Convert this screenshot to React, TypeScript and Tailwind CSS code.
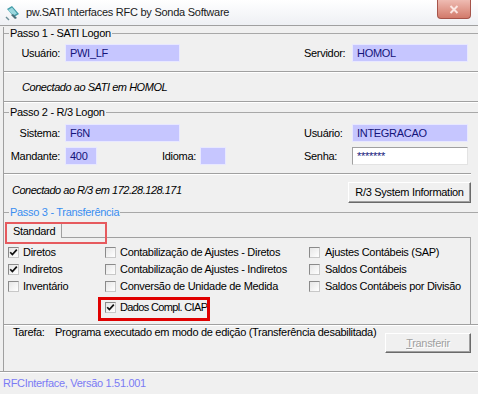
import React from "react";

function Field({ value, w, white }: { value: string; w: string; white?: boolean }) {
  return (
    <div
      className={`${w} h-[18px] flex items-center pl-[4px] text-[#14147a] ${
        white
          ? "bg-white border border-[#a0a0a0] border-r-[#e3e3e3] border-b-[#e3e3e3]"
          : "bg-[#c6c6ff] border border-[#e8e8ff]"
      }`}
    >
      {value}
    </div>
  );
}

function Check({ checked }: { checked?: boolean }) {
  return (
    <span className="w-[11px] h-[11px] shrink-0 flex items-center justify-center border border-[#8a8a8a] border-r-[#c8c8c8] border-b-[#c8c8c8] bg-gradient-to-br from-[#e6e6e6] to-white">
      {checked && (
        <svg width="9" height="9" viewBox="0 0 9 9">
          <path d="M1.2 4.2 L3.4 6.6 L7.8 1.6" stroke="#111" strokeWidth="1.7" fill="none" />
        </svg>
      )}
    </span>
  );
}

function Opt({ label, checked, gap = "gap-[4px]" }: { label: string; checked?: boolean; gap?: string }) {
  return (
    <div className={`flex items-center ${gap}`}>
      <Check checked={checked} />
      <span>{label}</span>
    </div>
  );
}

function WinButton({ children, w, disabled }: { children: React.ReactNode; w: string; disabled?: boolean }) {
  return (
    <button
      className={`${w} h-full flex items-center justify-center bg-[#f0f0f0] border border-t-white border-l-white border-r-[#6a6a6a] border-b-[#6a6a6a] shadow-[inset_-1px_-1px_0_#a0a0a0] ${
        disabled ? "text-[#a0a0a0] [text-shadow:1px_1px_0_#fff]" : "text-black"
      }`}
    >
      {children}
    </button>
  );
}

export default function App() {
  return (
    <div className="w-[478px] h-[394px] overflow-hidden bg-[#f0f0f0] text-[11px] leading-[13px] tracking-[-0.3px] text-black font-['Liberation_Sans',Arial,sans-serif]">
      {/* title bar */}
      <div className="h-[26px] flex items-center border-b border-[#a0a0a0] bg-gradient-to-b from-white to-[#eef0f4]">
        <svg className="ml-[5px] shrink-0" width="16" height="16" viewBox="0 0 16 16">
          <path d="M2 4 L7 1 L14 9 L9 12 Z" fill="#3f9aa6" />
          <path d="M3 5 L7 2.5 L12 8.5 L8.5 10.5 Z" fill="#9ad7de" />
          <path d="M6 10 L10 14 L12 13 L8 9 Z" fill="#4a6f7a" />
          <path d="M1 12 L4 15" stroke="#6c8f98" strokeWidth="1.4" />
        </svg>
        <span className="ml-[5px] text-[11px] tracking-[-0.25px] text-[#1a1a1a]">
          pw.SATI Interfaces RFC by Sonda Software
        </span>
        <div className="ml-auto mr-[7px] self-start w-[34px] h-[19px] rounded-b-[4px] border border-t-0 border-[#a6544a] bg-gradient-to-b from-[#eebbb2] to-[#d27a6b] flex items-center justify-center">
          <svg width="10" height="9" viewBox="0 0 10 9">
            <path d="M1.5 1 L8.5 8 M8.5 1 L1.5 8" stroke="#fbe6e2" strokeWidth="2" />
          </svg>
        </div>
      </div>

      <div className="ml-[3px] w-[475px] border-l border-[#a0a0a0]">
        {/* Passo 1 */}
        <div className="h-[44px]">
          <fieldset className="mt-[1px] border-t border-[#a8a8a8]">
            <legend className="ml-[5px] px-[1px]">Passo 1 - SATI Logon</legend>
            <div className="mt-[4px] flex">
              <div className="w-[61px] pr-[5px] text-right self-center">Usuário:</div>
              <Field value="PWI_LF" w="w-[115px]" />
              <div className="w-[124px]" />
              <div className="w-[48px] self-center">Servidor:</div>
              <Field value="HOMOL" w="w-[116px]" />
            </div>
          </fieldset>
        </div>

        <div className="h-[30px] border-t border-[#a0a0a0] shadow-[inset_0_1px_0_#fff] flex items-center pt-[2px] pl-[18px] italic tracking-[-0.45px]">
          Conectado ao SATI em HOMOL
        </div>

        {/* Passo 2 */}
        <div className="h-[72px] border-t border-[#a0a0a0] shadow-[inset_0_1px_0_#fff]">
          <fieldset className="mt-[4px] border-t border-[#a8a8a8]">
            <legend className="ml-[5px] px-[1px]">Passo 2 - R/3 Logon</legend>
            <div className="mt-[5px] flex">
              <div className="w-[61px] pr-[5px] text-right self-center">Sistema:</div>
              <Field value="F6N" w="w-[115px]" />
              <div className="w-[124px]" />
              <div className="w-[48px] self-center">Usuário:</div>
              <Field value="INTEGRACAO" w="w-[116px]" />
            </div>
            <div className="mt-[5px] flex">
              <div className="w-[61px] pr-[5px] text-right self-center">Mandante:</div>
              <Field value="400" w="w-[32px]" />
              <div className="w-[103px] pr-[4px] text-right self-center">Idioma:</div>
              <Field value="" w="w-[26px]" />
              <div className="w-[78px]" />
              <div className="w-[48px] self-center">Senha:</div>
              <Field value="*******" w="w-[116px]" white />
            </div>
          </fieldset>
        </div>

        <div className="h-[33px] border-t border-[#a0a0a0] shadow-[inset_0_1px_0_#fff] flex items-start w-[467px]">
          <span className="mt-[10px] ml-[8px] italic tracking-[-0.5px]">Conectado ao R/3 em 172.28.128.171</span>
          <div className="ml-auto mt-[8px] h-[21px]">
            <WinButton w="w-[123px]">R/3 System Information</WinButton>
          </div>
        </div>

        {/* Passo 3 */}
        <fieldset className="border-t border-[#a8a8a8]">
          <legend className="ml-[5px] px-[1px] text-[#3a8ef0]">Passo 3 - Transferência</legend>
          <div className="relative h-[19px] w-[467px] flex">
            <div className="mt-[4px] w-[58px] h-[15px] border-r border-[#a0a0a0] pl-[9px] pt-[2px]">Standard</div>
            <div className="flex-1 border-b border-[#a0a0a0]" />
            <div className="absolute left-[1px] top-[3px] w-[102px] h-[22px] border-2 border-[#e65a5e]" />
          </div>
          <div className="h-[86px] w-[467px] border-r border-[#a0a0a0] pt-[6px] pl-[4px]">
            <div className="flex h-[17px] items-center">
              <div className="w-[97px]"><Opt label="Diretos" checked /></div>
              <div className="w-[204px]"><Opt label="Contabilização de Ajustes - Diretos" /></div>
              <Opt label="Ajustes Contábeis (SAP)" gap="gap-[5px]" />
            </div>
            <div className="flex h-[17px] items-center">
              <div className="w-[97px]"><Opt label="Indiretos" checked /></div>
              <div className="w-[204px]"><Opt label="Contabilização de Ajustes - Indiretos" /></div>
              <Opt label="Saldos Contábeis" gap="gap-[5px]" />
            </div>
            <div className="flex h-[17px] items-center">
              <div className="w-[97px]"><Opt label="Inventário" /></div>
              <div className="w-[204px]"><Opt label="Conversão de Unidade de Medida" /></div>
              <Opt label="Saldos Contábeis por Divisão" gap="gap-[5px]" />
            </div>
            <div className="flex h-[17px] items-center mt-[4px]">
              <div className="w-[97px]" />
              <div className="relative tracking-[-0.65px]">
                <Opt label="Dados Compl. CIAP" checked />
                <div className="absolute left-[-7px] top-[-4px] w-[112px] h-[24px] border-[3px] border-[#e00000]" />
              </div>
            </div>
          </div>
        </fieldset>

        {/* Tarefa */}
        <div className="h-[47px] w-[475px] border-t border-[#a0a0a0] shadow-[inset_0_1px_0_#fff]">
          <div className="flex items-start w-[467px]">
            <span className="mt-[1px] ml-[9px] w-[42px]">Tarefa:</span>
            <span className="mt-[1px]">Programa executado em modo de edição (Transferência desabilitada)</span>
            <div className="ml-auto mt-[8px] h-[20px]">
              <WinButton w="w-[86px]" disabled>
                <span><span className="underline">T</span>ransferir</span>
              </WinButton>
            </div>
          </div>
        </div>
      </div>

      <div className="border-t border-[#a0a0a0] shadow-[inset_0_1px_0_#fff] pl-[3px] pt-[5px] text-[#7b7bf5]">
        RFCInterface, Versão 1.51.001
      </div>
    </div>
  );
}
